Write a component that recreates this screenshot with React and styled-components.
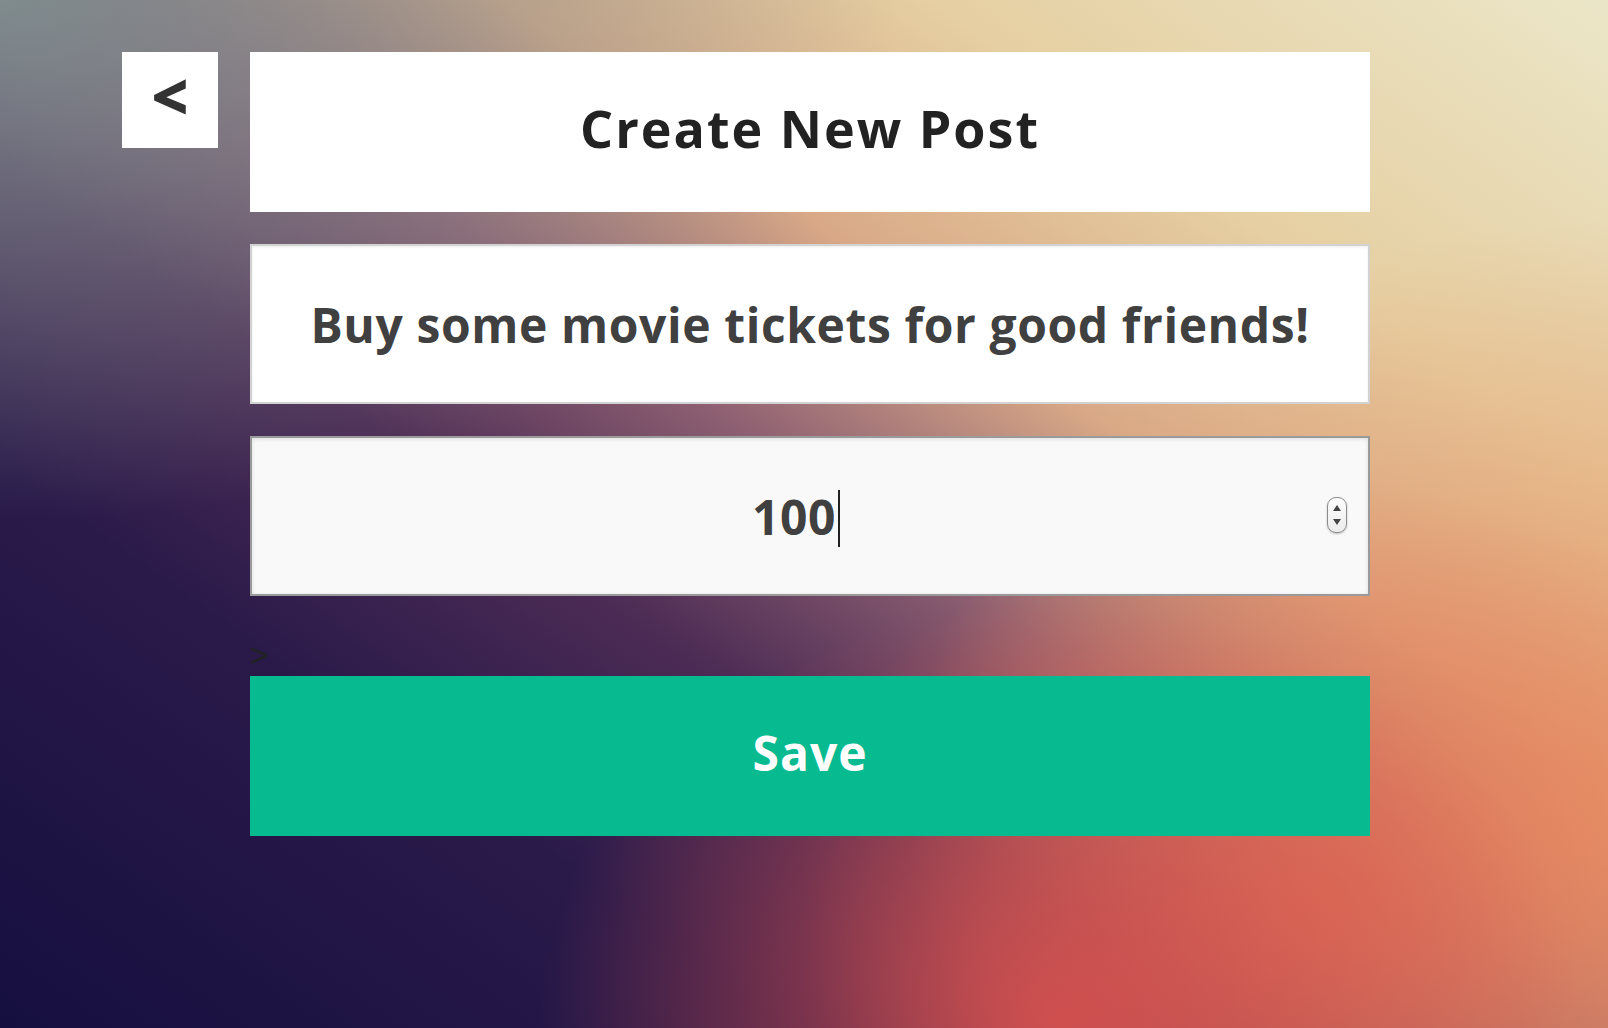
import React from "react";
import styled, { createGlobalStyle } from "styled-components";

const GlobalStyle = createGlobalStyle`
  html, body {
    margin: 0;
    padding: 0;
    height: 100%;
  }
  body {
    font-family: "Open Sans", Lato, sans-serif;
    overflow: hidden;
  }
`;

const Page = styled.div`
  width: 1608px;
  height: 1028px;
  box-sizing: border-box;
  padding: 52px 0 0 122px;
  display: flex;
  align-items: flex-start;
  gap: 32px;
  background:
    radial-gradient(ellipse 520px 420px at 1060px 1020px, rgba(216, 80, 78, 0.9), rgba(216, 80, 78, 0) 100%),
    radial-gradient(ellipse 520px 420px at 1320px 900px, rgba(228, 112, 84, 0.8), rgba(228, 112, 84, 0) 100%),
    radial-gradient(ellipse 700px 600px at 1608px 820px, rgba(232, 152, 104, 0.9), rgba(232, 152, 104, 0) 100%),
    radial-gradient(ellipse 900px 520px at 0px 0px, rgba(128, 146, 146, 0.9), rgba(128, 146, 146, 0) 100%),
    linear-gradient(215deg, #ebe6c8 0%, #e6cfa2 22%, #d9a987 36%, #8e6072 48%, #4d2c55 60%, #2a1a4a 74%, #150f3f 100%);
`;

const BackButton = styled.button`
  width: 96px;
  height: 96px;
  flex: none;
  border: none;
  background: #fff;
  color: #333;
  font-family: "Open Sans", sans-serif;
  font-weight: 800;
  font-size: 64px;
  line-height: 1;
  padding: 0 0 8px;
  display: flex;
  align-items: center;
  justify-content: center;
  cursor: pointer;
`;

const Column = styled.div`
  width: 1120px;
  display: flex;
  flex-direction: column;
`;

const Header = styled.h1`
  box-sizing: border-box;
  margin: 0 0 32px;
  height: 160px;
  padding-bottom: 10px;
  background: #fff;
  display: flex;
  align-items: center;
  justify-content: center;
  font-family: "Open Sans", sans-serif;
  font-weight: 700;
  font-size: 52px;
  letter-spacing: 2px;
  color: #222;
`;

const TextInput = styled.input`
  box-sizing: border-box;
  width: 100%;
  height: 160px;
  margin: 0 0 32px;
  border: 2px solid #d2d2d2;
  box-shadow: inset 0 1px 3px rgba(0, 0, 0, 0.08);
  background: #fff;
  font-family: "Open Sans", sans-serif;
  font-weight: 700;
  font-size: 48px;
  letter-spacing: 0.6px;
  color: #404040;
  text-align: center;
  outline: none;
  padding: 0;
`;

const NumberField = styled.div`
  position: relative;
  box-sizing: border-box;
  height: 160px;
  border: 2px solid #9a9a9a;
  box-shadow: inset 0 1px 4px rgba(0, 0, 0, 0.12);
  background: #f9f9f9;
  display: flex;
  align-items: center;
  justify-content: center;
  padding-right: 28px;
  font-family: "Open Sans", sans-serif;
  font-weight: 700;
  font-size: 48px;
  letter-spacing: 0.6px;
  color: #404040;
`;

const Caret = styled.span`
  display: inline-block;
  width: 2px;
  height: 57px;
  background: #222;
  margin-left: 2px;
  margin-top: 4px;
`;

const Spinner = styled.div`
  position: absolute;
  right: 21px;
  top: 59px;
  width: 18px;
  height: 34px;
  border: 1px solid #8c8c8c;
  border-radius: 9px;
  background: linear-gradient(#fdfdfd, #ececec);
  box-shadow: 0 1px 2px rgba(0, 0, 0, 0.25);
  display: flex;
  flex-direction: column;
  align-items: center;
  justify-content: space-evenly;
`;

const Arrow = styled.span`
  width: 0;
  height: 0;
  border-left: 4px solid transparent;
  border-right: 4px solid transparent;
  ${(p) => (p.$down ? "border-top: 6px solid #444;" : "border-bottom: 6px solid #444;")}
`;

const Stray = styled.div`
  height: 80px;
  box-sizing: border-box;
  padding-top: 43px;
  font-family: "Liberation Sans", sans-serif;
  font-size: 32px;
  line-height: 32px;
  color: #222;
`;

const SaveButton = styled.button`
  height: 160px;
  border: none;
  padding: 0 0 8px;
  background: #07ba8f;
  color: #fff;
  font-family: "Open Sans", sans-serif;
  font-weight: 700;
  font-size: 48px;
  letter-spacing: 1px;
  cursor: pointer;
`;

export default function App() {
  return (
    <>
      <GlobalStyle />
      <Page>
        <BackButton>&lt;</BackButton>
        <Column>
          <Header>Create New Post</Header>
          <TextInput defaultValue="Buy some movie tickets for good friends!" readOnly />
          <NumberField>
            <span>100</span>
            <Caret />
            <Spinner>
              <Arrow />
              <Arrow $down />
            </Spinner>
          </NumberField>
          <Stray>&gt;</Stray>
          <SaveButton>Save</SaveButton>
        </Column>
      </Page>
    </>
  );
}
